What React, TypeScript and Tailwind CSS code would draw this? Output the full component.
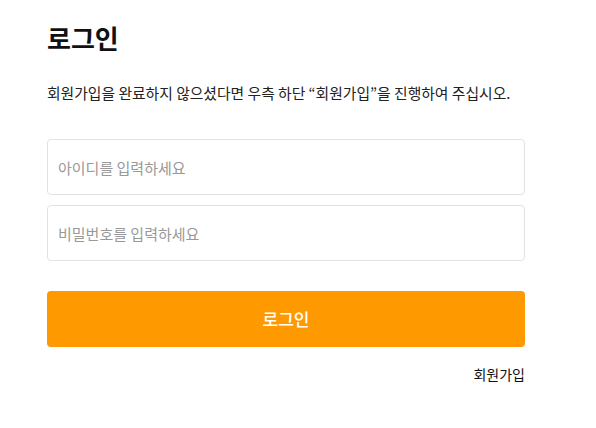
export default function App() {
  return (
    <div
      className="w-[596px] h-[428px] bg-white"
      style={{ fontFamily: '"Noto Sans CJK KR", "Noto Sans", sans-serif' }}
    >
      <div className="w-[478px] ml-[47px] pt-[18px] flex flex-col">
        <h1 className="text-[26px] font-bold text-[#111] leading-[40px]">로그인</h1>
        <p className="mt-[24px] text-[14.8px] text-[#222] leading-[22px]">
          회원가입을 완료하지 않으셨다면 우측 하단 “회원가입”을 진행하여 주십시오.
        </p>
        <div className="mt-[35px] flex flex-col gap-[10px]">
          <input
            className="h-[56px] w-full border border-[#e2e2e2] rounded-[4px] px-[10px] text-[15px] outline-none placeholder:text-[#999]"
            placeholder="아이디를 입력하세요"
          />
          <input
            type="password"
            className="h-[56px] w-full border border-[#e2e2e2] rounded-[4px] px-[10px] text-[15px] outline-none placeholder:text-[#999]"
            placeholder="비밀번호를 입력하세요"
          />
        </div>
        <button className="mt-[30px] h-[56px] w-full bg-[#ff9900] rounded-[4px] text-white text-[17px] font-medium">
          로그인
        </button>
        <div className="mt-[16px] flex justify-end">
          <a className="text-[14px] text-[#111] leading-[22px]">회원가입</a>
        </div>
      </div>
    </div>
  );
}
